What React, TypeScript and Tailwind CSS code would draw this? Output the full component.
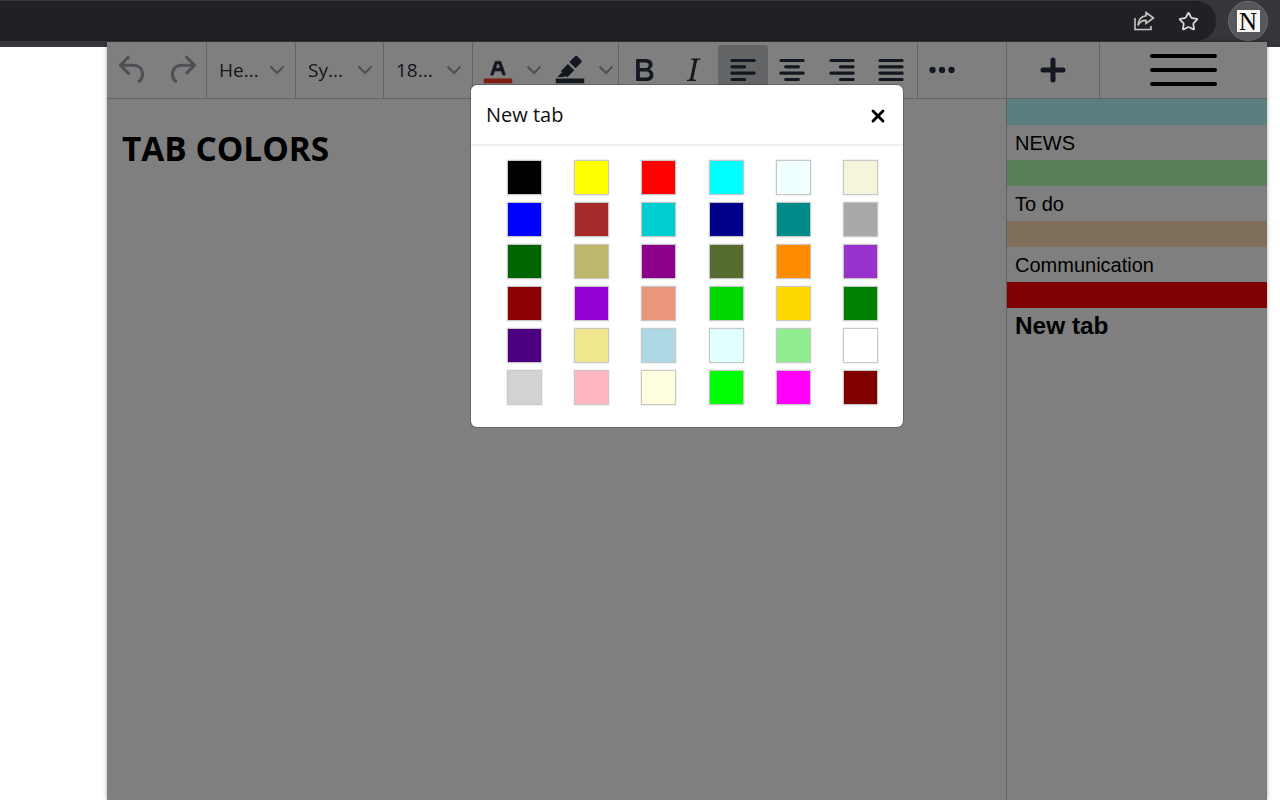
import React from 'react';
import { Star, X } from 'lucide-react';

const SANS = { fontFamily: '"Open Sans", "Noto Sans", sans-serif' };
const ARIAL = { fontFamily: '"Liberation Sans", Arial, sans-serif' };

const SWATCHES = [
  '#000000', '#ffff00', '#ff0000', '#00ffff', '#f0ffff', '#f5f5dc',
  '#0000ff', '#a52a2a', '#00ced1', '#00008b', '#008b8b', '#a9a9a9',
  '#006400', '#bdb76b', '#8b008b', '#556b2f', '#ff8c00', '#9932cc',
  '#8b0000', '#9400d3', '#e9967a', '#00d700', '#ffd700', '#008000',
  '#4b0082', '#f0e68c', '#add8e6', '#e0ffff', '#90ee90', '#ffffff',
  '#d3d3d3', '#ffb6c1', '#ffffe0', '#00ff00', '#ff00ff', '#800000',
];

const TABS = [
  { color: 'bg-[#b6ffff]', name: 'NEWS' },
  { color: 'bg-[#b6ffb0]', name: 'To do' },
  { color: 'bg-[#ffdcb0]', name: 'Communication' },
  { color: 'bg-[#ff0000]', name: '' },
];

const ICONS: Record<string, string> = {
  undo: 'M6.4 8H12c3.7 0 6.2 2 6.8 5.1.6 2.7-.4 5.6-2.3 6.8a1 1 0 01-1-1.8c1.1-.6 1.8-2.7 1.4-4.6-.5-2.1-2.1-3.5-4.9-3.5H6.4l3.3 3.3a1 1 0 11-1.4 1.4l-5-5a1 1 0 010-1.4l5-5a1 1 0 011.4 1.4L6.4 8z',
  redo: 'M17.6 10H12c-2.8 0-4.4 1.4-4.9 3.5-.4 2 .3 4 1.4 4.6a1 1 0 11-1 1.8c-2-1.2-2.9-4.1-2.3-6.8.6-3 3-5.1 6.8-5.1h5.6l-3.3-3.3a1 1 0 111.4-1.4l5 5a1 1 0 010 1.4l-5 5a1 1 0 01-1.4-1.4l3.3-3.3z',
  bold: 'M7.8 19c-.3 0-.5 0-.6-.2l-.2-.5V5.7c0-.2 0-.4.2-.5l.6-.2h5c1.5 0 2.7.3 3.5 1 .7.6 1.1 1.4 1.1 2.5a3 3 0 01-.6 1.9c-.4.6-1 1-1.6 1.2.4.1.9.3 1.3.6s.8.7 1 1.2c.4.4.5 1 .5 1.6 0 1.3-.4 2.3-1.3 3-.8.7-2.1 1-3.8 1H7.8zm5-8.3c.6 0 1.2-.1 1.6-.5.4-.3.6-.7.6-1.3 0-1.1-.8-1.7-2.3-1.7H9.3v3.5h3.4zm.5 6c.7 0 1.3-.1 1.7-.4.4-.4.6-.9.6-1.5s-.2-1-.7-1.4c-.4-.3-1-.4-2-.4H9.4v3.8h4z',
  italic: 'M16.7 4.7l-.1.9h-.3c-.6 0-1 0-1.4.3-.3.3-.4.6-.5 1.1l-2.1 9.8v.6c0 .5.4.8 1.4.8h.2l-.2.8H8l.2-.8h.2c1.1 0 1.8-.5 2-1.5l2-9.8.1-.5c0-.6-.4-.8-1.4-.8h-.3l.2-.9h5.8z',
  alignLeft: 'M5 5h14c.6 0 1 .4 1 1s-.4 1-1 1H5a1 1 0 110-2zm0 4h8c.6 0 1 .4 1 1s-.4 1-1 1H5a1 1 0 110-2zm0 8h8c.6 0 1 .4 1 1s-.4 1-1 1H5a1 1 0 010-2zm0-4h14c.6 0 1 .4 1 1s-.4 1-1 1H5a1 1 0 010-2z',
  alignCenter: 'M5 5h14c.6 0 1 .4 1 1s-.4 1-1 1H5a1 1 0 110-2zm3 4h8c.6 0 1 .4 1 1s-.4 1-1 1H8a1 1 0 110-2zm0 8h8c.6 0 1 .4 1 1s-.4 1-1 1H8a1 1 0 010-2zm-3-4h14c.6 0 1 .4 1 1s-.4 1-1 1H5a1 1 0 010-2z',
  alignRight: 'M5 5h14c.6 0 1 .4 1 1s-.4 1-1 1H5a1 1 0 110-2zm6 4h8c.6 0 1 .4 1 1s-.4 1-1 1h-8a1 1 0 010-2zm0 8h8c.6 0 1 .4 1 1s-.4 1-1 1h-8a1 1 0 010-2zm-6-4h14c.6 0 1 .4 1 1s-.4 1-1 1H5a1 1 0 010-2z',
  justify: 'M5 5h14c.6 0 1 .4 1 1s-.4 1-1 1H5a1 1 0 110-2zm0 4h14c.6 0 1 .4 1 1s-.4 1-1 1H5a1 1 0 110-2zm0 4h14c.6 0 1 .4 1 1s-.4 1-1 1H5a1 1 0 010-2zm0 4h14c.6 0 1 .4 1 1s-.4 1-1 1H5a1 1 0 010-2z',
  more: 'M6 10a2 2 0 00-2 2c0 1.1.9 2 2 2a2 2 0 002-2 2 2 0 00-2-2zm12 0a2 2 0 00-2 2c0 1.1.9 2 2 2a2 2 0 002-2 2 2 0 00-2-2zm-6 0a2 2 0 00-2 2c0 1.1.9 2 2 2a2 2 0 002-2 2 2 0 00-2-2z',
  textColor: 'M8.7 16h-.8a.5.5 0 01-.5-.6l2.7-9c.1-.3.3-.4.5-.4h2.8c.2 0 .4.1.5.4l2.7 9a.5.5 0 01-.5.6h-.8a.5.5 0 01-.4-.4l-.7-2.2c0-.3-.3-.4-.5-.4h-3.4c-.2 0-.4.1-.5.4l-.7 2.2c0 .3-.2.4-.4.4zm2.6-7.6l-.6 2a.5.5 0 00.5.6h1.6a.5.5 0 00.5-.6l-.6-2c0-.3-.3-.4-.5-.4h-.4c-.2 0-.4.1-.5.4z',
  highlight: 'M7.3 17H4l3-3-.7-.8 4.4-4.4 4 4-4.4 4.4-.8-.7zM11.6 7.6l3.6-3.6a1 1 0 011.4 0l2.5 2.5a1 1 0 010 1.4l-3.6 3.6z',
};

function Icon({ name, className = 'fill-[#263040]' }: { name: string; className?: string }) {
  return (
    <svg viewBox="0 0 24 24" className={`h-[38px] w-[38px] ${className}`}>
      <path d={ICONS[name]} />
    </svg>
  );
}

function Chevron() {
  return (
    <svg viewBox="0 0 16 10" className="h-[10px] w-[16px] shrink-0 fill-none stroke-[#9aa0a8] stroke-2">
      <path d="M1.5 1.5 8 8l6.5-6.5" />
    </svg>
  );
}

function ToolButton({ name, active }: { name: string; active?: boolean }) {
  return (
    <div className={`flex h-[50px] w-[49.5px] items-center justify-center rounded-[3px] ${active ? 'bg-[#c8cacc]' : ''}`}>
      <Icon name={name} />
    </div>
  );
}

function SelectBox({ label, width }: { label: string; width: string }) {
  return (
    <div className={`flex h-full items-center justify-between border-r border-[#c8c8c8] pl-[12px] pr-[10px] ${width}`}>
      <span className="text-[19px] text-[#263040]" style={SANS}>{label}</span>
      <Chevron />
    </div>
  );
}

function ColorButton({ name, bar }: { name: string; bar: string }) {
  return (
    <div className="flex h-full w-[72.5px] shrink-0 items-start">
      <svg viewBox="0 0 24 24" className="mt-[8px] h-[38px] w-[38px] shrink-0">
        {name === 'textColor' ? (
          <path d={ICONS[name]} transform="translate(0 1.8) scale(1 .88)" className="fill-[#263040] stroke-[#263040] stroke-[.4]" />
        ) : (
          <path d={ICONS[name]} className="fill-[#263040]" />
        )}
        <path d="M3 18h18v3H3z" className={bar} />
      </svg>
      <div className="ml-[9px] mt-[23px]"><Chevron /></div>
    </div>
  );
}

function Toolbar() {
  return (
    <div className="flex h-[57px] w-full shrink-0 items-center border-b border-[#c8c8c8] bg-white">
      <div className="flex h-full w-[100px] items-center gap-[11px] border-r border-[#c8c8c8] pl-[7px]">
        <Icon name="undo" className="fill-[#9aa0a8]" />
        <Icon name="redo" className="fill-[#9aa0a8]" />
      </div>
      <SelectBox label="He..." width="w-[89px]" />
      <SelectBox label="Sy..." width="w-[88px]" />
      <SelectBox label="18..." width="w-[89px]" />
      <div className="flex h-full w-[146px] items-start border-r border-[#c8c8c8] pl-[5.5px]">
        <ColorButton name="textColor" bar="fill-[#ff3a22]" />
        <ColorButton name="highlight" bar="fill-[#263040]" />
      </div>
      <div className="flex h-full w-[299px] items-center border-r border-[#c8c8c8]">
        <ToolButton name="bold" />
        <ToolButton name="italic" />
        <ToolButton name="alignLeft" active />
        <ToolButton name="alignCenter" />
        <ToolButton name="alignRight" />
        <ToolButton name="justify" />
      </div>
      <div className="flex h-full w-[89px] items-center border-r border-[#c8c8c8] pl-[5px]">
        <Icon name="more" />
      </div>
      <div className="flex h-full w-[93px] items-center justify-center border-r border-[#c8c8c8]">
        <svg viewBox="0 0 26 26" className="h-[26px] w-[26px] fill-none stroke-[#263040] stroke-[5px]" strokeLinecap="round">
          <path d="M13 3v20M3 13h20" />
        </svg>
      </div>
      <div className="flex h-full flex-1 flex-col items-center justify-center gap-[10px]">
        <div className="h-[4px] w-[67px] rounded-full bg-black" />
        <div className="h-[4px] w-[67px] rounded-full bg-black" />
        <div className="h-[4px] w-[67px] rounded-full bg-black" />
      </div>
    </div>
  );
}

function TabList() {
  return (
    <aside className="w-[261px] shrink-0 border-l border-[#c0c0c0] bg-white" style={ARIAL}>
      {TABS.map((tab, i) => (
        <div key={i}>
          <div className={`h-[26px] ${tab.color}`} />
          <div className="flex h-[35px] items-center pl-[8px] text-[20px] text-black">{tab.name}</div>
        </div>
      ))}
      <div className="-mt-[35px] flex h-[37px] items-center pl-[8px] text-[24.4px] font-bold text-black">New tab</div>
    </aside>
  );
}

function ColorModal() {
  return (
    <div className="absolute left-[364px] top-[43px] w-[432px] rounded-[6px] bg-white shadow-[0_0_0_1px_rgba(0,0,0,0.2)]" style={SANS}>
      <div className="flex h-[61px] items-center justify-between border-b-2 border-[#eceef2] px-[15px]">
        <span className="pt-[1px] text-[20px] text-[#111]">New tab</span>
        <X size={20} strokeWidth={3.4} className="mt-[3px] text-black" />
      </div>
      <div className="grid grid-cols-[repeat(6,35px)] justify-between gap-y-[7px] pb-[22px] pl-[36px] pr-[25px] pt-[14px]">
        {SWATCHES.map((color, i) => (
          <div key={i} className="h-[35px] w-[35px] border border-[#c8c8c8] shadow-[0_0_1px_#b0b0b0]" style={{ backgroundColor: color }} />
        ))}
      </div>
    </div>
  );
}

function BrowserBar() {
  return (
    <div className="flex h-[47px] shrink-0 items-start bg-[#35363a]">
      <div className="flex h-[41px] flex-1 items-center justify-end gap-[22px] rounded-r-[20px] border-t border-[#35363a] bg-[#202124] pr-[15px]">
        <svg viewBox="0 0 24 24" className="h-[24px] w-[24px] fill-none stroke-[#c4c7c5] stroke-[1.6]">
          <path d="M3 9v11.5h16V17" />
          <path d="M14 3.5 21.5 9 14 14.5V11.4C10 11.2 7.6 13 6 16.5 6.2 11.5 9 7.5 14 6.8z" />
        </svg>
        <Star size={21} strokeWidth={2} className="mr-[2px] text-[#d8d8d8]" />
      </div>
      <div className="flex w-[64px] items-start pl-[12px] pt-[1px]">
        <div className="flex h-[40px] w-[40px] items-center justify-center rounded-full border border-[#6a6b6e] bg-[#56575a]">
          <div
            className="flex h-[22px] w-[23px] items-center justify-center bg-[#f6f6f4] text-[25px] leading-none text-black"
            style={{ fontFamily: '"Liberation Serif", serif' }}
          >
            N
          </div>
        </div>
      </div>
    </div>
  );
}

export default function App() {
  return (
    <div className="flex h-screen w-full flex-col overflow-hidden bg-white">
      <BrowserBar />
      <div className="relative z-10 -mt-[5px] ml-[107px] flex w-[1160px] flex-1 flex-col bg-white shadow-[0_0_4px_rgba(0,0,0,0.35)]">
        <Toolbar />
        <div className="flex flex-1">
          <main className="flex-1 pl-[15px] pt-[27px]">
            <h1 className="text-[33.4px] font-bold leading-[44px] text-black" style={SANS}>TAB COLORS</h1>
          </main>
          <TabList />
        </div>
        <div className="absolute inset-0 bg-black/50" />
        <ColorModal />
      </div>
    </div>
  );
}
